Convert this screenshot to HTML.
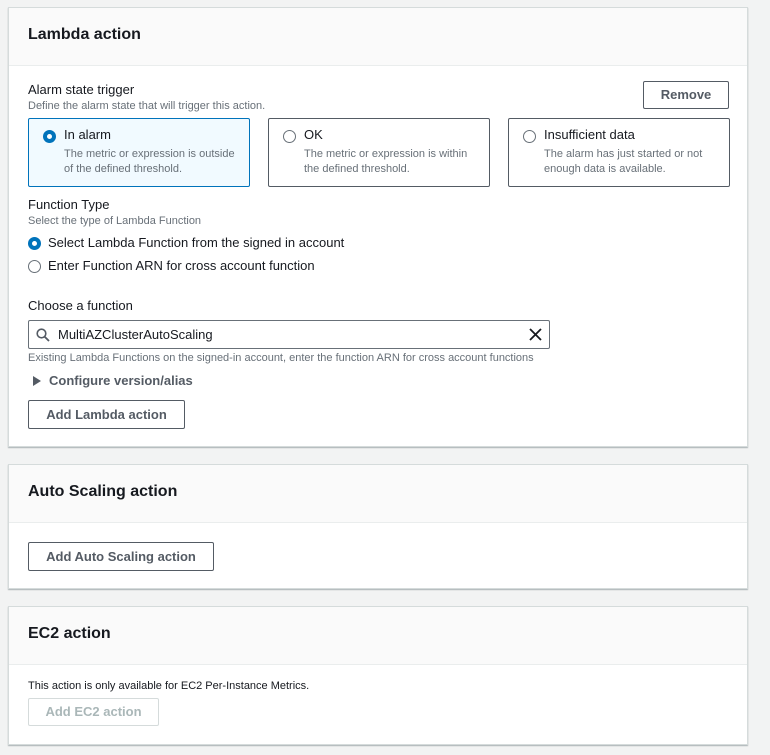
<!DOCTYPE html>
<html><head><style>
*{margin:0;padding:0;box-sizing:border-box}
body{width:770px;height:755px;background:#f2f3f3;font-family:"Liberation Sans",sans-serif;color:#16191f;position:relative;overflow:hidden}
.p{position:absolute;left:8px;width:740px;background:#fff;border:1px solid #d5dbdb;box-shadow:0 1px 1px rgba(0,28,36,.3)}
.h{background:#fafafa;border-bottom:1px solid #eaeded;height:58px;padding:18px 0 0 19px;font-size:16px;font-weight:bold}
.a{position:absolute;white-space:nowrap}
.lbl{font-size:13px}
.sm{font-size:11px;color:#687078}
.btn{position:absolute;border:1px solid #545b64;background:#fff;font-size:13px;font-weight:bold;color:#545b64;text-align:center;border-radius:2px}
.tile{position:absolute;top:110px;width:222px;height:69px;border:1px solid #545b64;border-radius:2px}
.tile .t{position:absolute;left:35px;top:8px;font-size:13px}
.tile .d{position:absolute;left:35px;top:28px;font-size:11px;color:#687078;line-height:15px}
.r{position:absolute;width:13px;height:13px;border:1.5px solid #687078;border-radius:50%;background:#fff}
.r.on{border:4px solid #0073bb}
</style></head><body>
<div class="p" style="top:7px;height:440px">
<div class="h">Lambda action</div>
<div class="a lbl" style="left:19px;top:74px">Alarm state trigger</div>
<div class="a sm" style="left:19px;top:92px">Define the alarm state that will trigger this action.</div>
<div class="btn" style="left:634px;top:73px;width:86px;height:28px;line-height:26px">Remove</div>
<div class="tile" style="left:19px;background:#f1faff;border-color:#0073bb"><div class="r on" style="left:14px;top:11px"></div><div class="t">In alarm</div><div class="d">The metric or expression is outside<br>of the defined threshold.</div></div>
<div class="tile" style="left:259px"><div class="r" style="left:14px;top:11px"></div><div class="t">OK</div><div class="d">The metric or expression is within<br>the defined threshold.</div></div>
<div class="tile" style="left:499px"><div class="r" style="left:14px;top:11px"></div><div class="t">Insufficient data</div><div class="d">The alarm has just started or not<br>enough data is available.</div></div>
<div class="a lbl" style="left:19px;top:189px">Function Type</div>
<div class="a sm" style="left:19px;top:207px">Select the type of Lambda Function</div>
<div class="r on" style="left:19px;top:229px"></div><div class="a lbl" style="left:39px;top:227px">Select Lambda Function from the signed in account</div>
<div class="r" style="left:19px;top:252px"></div><div class="a lbl" style="left:39px;top:250px">Enter Function ARN for cross account function</div>
<div class="a lbl" style="left:19px;top:290px">Choose a function</div>
<div class="a" style="left:19px;top:312px;width:522px;height:29px;border:1px solid #687078;border-radius:2px">
<svg style="position:absolute;left:7px;top:7px" width="14" height="14" viewBox="0 0 14 14"><circle cx="5.5" cy="5.5" r="4.3" fill="none" stroke="#545b64" stroke-width="1.6"/><path d="M8.7 8.7L13 13" stroke="#545b64" stroke-width="1.8"/></svg>
<div class="a lbl" style="left:29px;top:6px">MultiAZClusterAutoScaling</div>
<svg style="position:absolute;left:500px;top:7px" width="13" height="13" viewBox="0 0 13 13"><path d="M1 1L12 12M12 1L1 12" stroke="#16191f" stroke-width="1.8"/></svg>
</div>
<div class="a sm" style="left:19px;top:344px">Existing Lambda Functions on the signed-in account, enter the function ARN for cross account functions</div>
<svg class="a" style="left:24px;top:368px" width="8" height="10"><path d="M0 0L8 5L0 10Z" fill="#545b64"/></svg>
<div class="a lbl" style="left:40px;top:365px;font-weight:bold;color:#545b64">Configure version/alias</div>
<div class="btn" style="left:19px;top:392px;width:157px;height:29px;line-height:27px">Add Lambda action</div>
</div>
<div class="p" style="top:464px;height:125px">
<div class="h">Auto Scaling action</div>
<div class="btn" style="left:19px;top:77px;width:186px;height:29px;line-height:27px">Add Auto Scaling action</div>
</div>
<div class="p" style="top:606px;height:139px">
<div class="h">EC2 action</div>
<div class="a sm" style="left:19px;top:73px;color:#16191f">This action is only available for EC2 Per-Instance Metrics.</div>
<div class="btn" style="left:19px;top:91px;width:131px;height:28px;line-height:26px;border-color:#d5dbdb;color:#aab7b8">Add EC2 action</div>
</div>
</body></html>
